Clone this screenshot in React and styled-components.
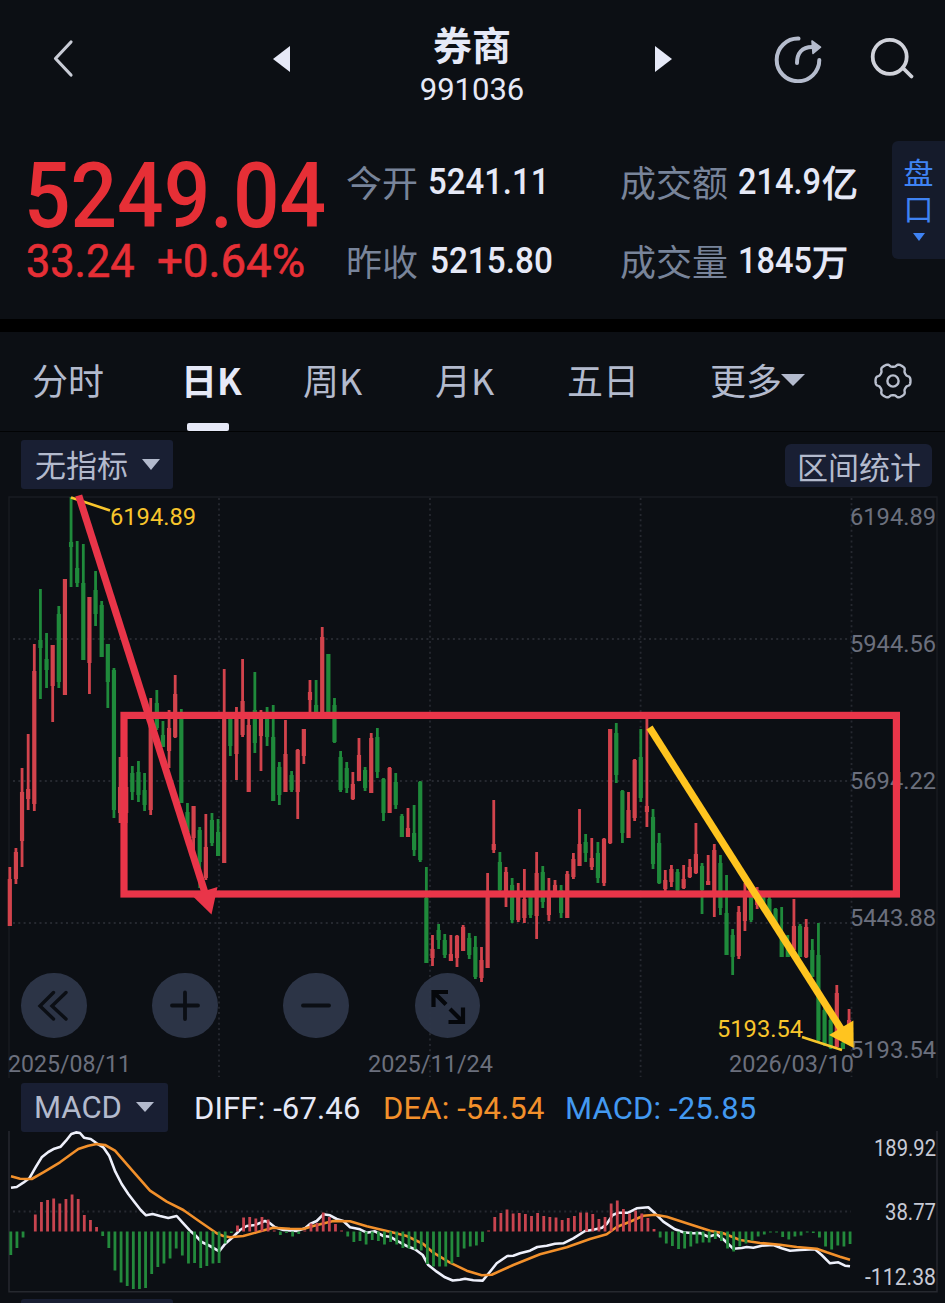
import React from 'react';
import styled, { createGlobalStyle } from 'styled-components';

const NUM = 'Roboto, "Noto Sans CJK SC", sans-serif';
const CJK = '"Noto Sans CJK SC", sans-serif';

const c = {
  bg: '#0c0f14',
  chip: '#191f33',
  up: '#d2434c',
  down: '#1f8a3b',
  red: '#e62f36',
  text: '#e6e9f7',
  soft: '#b3bacd',
  muted: '#78849a',
  axis: '#6b6f7d',
  yellow: '#f8c52c',
  orange: '#f2902b',
  blue: '#4399f0',
  mark: '#e93549',
};

const Global = createGlobalStyle`
  * { box-sizing: border-box; }
  body { margin: 0; background: ${c.bg}; overflow: hidden; }
  svg { display: block; }
`;

const Screen = styled.main`
  width: 945px;
  height: 1303px;
  overflow: hidden;
  display: flex;
  flex-direction: column;
  background: ${c.bg};
  color: ${c.text};
  font-family: ${CJK};
`;

const Header = styled.header`
  height: 118px;
  flex: none;
  display: flex;
  align-items: center;
`;

const IconButton = styled.span`
  flex: none;
  margin-left: ${(p) => p.$before}px;
`;

const Title = styled.div`
  width: 120px;
  margin-left: 122px;
  padding-top: 11px;
  text-align: center;
`;

const Name = styled.div`
  font-size: 39px;
  font-weight: 700;
  line-height: 46px;
`;

const Code = styled.div`
  font: 400 31px/38px ${NUM};
  margin-top: 5px;
`;

const Summary = styled.section`
  height: 201px;
  flex: none;
  display: flex;
  padding-top: 23px;
`;

const PriceBlock = styled.div`
  width: 322px;
  margin-left: 24px;
  color: ${c.red};
  font-family: ${NUM};
  white-space: nowrap;
`;

const Stretch = styled.span`
  display: inline-block;
  transform: scaleX(${(p) => p.$x});
  transform-origin: left center;
`;

const Price = styled.div`
  font-size: 91px;
  font-weight: 500;
  line-height: 92px;
  margin-top: 9px;
`;

const Change = styled.div`
  display: flex;
  font-size: 46px;
  line-height: 46px;
  margin-top: -4px;
  margin-left: 2px;
  -webkit-text-stroke: 0.6px ${c.red};

  > span:first-child { width: 131px; }
`;

const Stats = styled.div`
  display: grid;
  grid-template-columns: 274px 271px;
  grid-template-rows: 79px 79px;
  padding-top: 22px;
`;

const Stat = styled.div`
  display: flex;
  height: 38px;
  align-items: center;
  white-space: nowrap;
`;

const StatLabel = styled.span`
  color: ${c.muted};
  font-size: 36px;
  line-height: 38px;
  margin-top: -2px;
  margin-right: ${(p) => p.$gap || 10}px;
`;

const StatValue = styled.span`
  font: 500 37px/38px ${NUM};
  width: ${(p) => p.$w}px;
`;

const StatUnit = styled.span`
  font-size: 36px;
  font-weight: 400;
  line-height: 38px;
  margin-top: -3px;
  -webkit-text-stroke: 1px ${c.text};
`;

const SidePanel = styled.div`
  width: 54px;
  height: 118px;
  margin-left: 1px;
  border-radius: 6px 0 0 6px;
  background: #151b2b;
  color: #3f83f3;
  font-size: 30px;
  line-height: 36px;
  display: flex;
  flex-direction: column;
  align-items: center;
  padding-top: 12px;
`;

const Caret = styled.i`
  width: 0;
  height: 0;
  border-style: solid;
  border-color: currentColor transparent transparent;
  border-width: ${(p) => p.$h}px ${(p) => p.$w / 2}px 0;
  margin: ${(p) => p.$m || 0};
`;

const Band = styled.div`
  height: 13px;
  flex: none;
  background: #000;
`;

const Tabs = styled.nav`
  height: 100px;
  flex: none;
  display: grid;
  grid-template-columns: 149px 122px 132px 132px 143px 163px 40px;
  padding-left: 32px;
  border-bottom: 1px solid #020304;
`;

const Tab = styled.div`
  display: flex;
  align-items: center;
  height: 98px;
  padding-bottom: ${(p) => (p.$icon ? 0 : 5)}px;
  color: ${(p) => (p.$active ? c.text : c.soft)};
  font-size: 36px;
  font-weight: ${(p) => (p.$active ? 700 : 400)};
  position: relative;

  &::after {
    content: '';
    display: ${(p) => (p.$active ? 'block' : 'none')};
    position: absolute;
    left: 6px;
    bottom: -1px;
    width: 42px;
    height: 8px;
    border-radius: 2px;
    background: ${c.text};
  }
`;

const Toolbar = styled.div`
  height: 58px;
  flex: none;
  display: flex;
  justify-content: space-between;
  padding: 8px 13px 0 21px;
`;

const Chip = styled.div`
  height: ${(p) => p.$h}px;
  width: ${(p) => p.$w}px;
  margin-top: ${(p) => p.$top || 0}px;
  padding-left: ${(p) => p.$pad}px;
  padding-bottom: ${(p) => p.$lift || 0}px;
  border-radius: ${(p) => p.$r || 3}px;
  background: ${c.chip};
  color: ${c.soft};
  font-family: ${(p) => p.$font || CJK};
  font-size: 31px;
  display: flex;
  align-items: center;
  white-space: nowrap;
`;

const ChartArea = styled.section`
  position: relative;
  height: 593px;
  flex: none;
`;

const Controls = styled.div`
  position: absolute;
  left: 21px;
  top: 482.5px;
  display: flex;
  gap: 65.5px;
`;

const Round = styled.span`
  width: 65.7px;
  height: 65.7px;
  border-radius: 50%;
  background: rgba(46, 54, 73, 0.96);
`;

const MacdBar = styled.div`
  height: 48px;
  flex: none;
  display: flex;
  align-items: center;
  padding-left: 21px;
`;

const Reading = styled.span`
  font: 400 31px/40px ${NUM};
  color: ${(p) => p.$color};
  width: ${(p) => p.$w}px;
  margin-left: ${(p) => p.$before || 0}px;
  padding-top: 3px;
  letter-spacing: 0.15px;
  white-space: nowrap;
`;

const NextChip = styled.div`
  width: 152px;
  height: 6px;
  margin: 6px 0 0 21px;
  border-radius: 3px 3px 0 0;
  background: ${c.chip};
`;

const STEP = 6.126;

// [rising, high, low, body top, body bottom]
const candles = [
  [1,867,926,879,926],[1,848,884,852,879],[1,768,867,792,841],[1,734,810,789,799],[1,644,811,671,804],
  [0,589,699,640,648],[0,633,688,659,670],[1,645,722,645,686],[0,606,688,614,682],[1,579,695,579,695],
  [0,497,587,542,547],[0,541,587,568,583],[0,544,660,583,660],[1,597,694,597,663],[0,571,626,590,614],
  [0,601,657,605,657],[0,644,708,644,682],[0,668,818,670,810],[1,757,823,787,813],[1,757,823,787,813],
  [0,766,800,773,792],[0,761,802,772,795],[0,773,811,790,805],[1,698,815,717,810],[0,690,730,703,728],
  [0,721,747,735,747],[1,710,768,728,751],[1,675,738,694,737],[0,709,803,715,803],[0,803,832,812,832],
  [1,806,850,806,838],[0,827,888,830,862],[1,814,880,847,878],[0,813,846,820,843],[0,819,856,832,856],
  [1,669,863,717,863],[0,716,756,718,746],[1,707,780,719,754],[1,659,737,701,735],[1,716,792,725,792],
  [0,672,753,710,743],[1,710,771,713,736],[0,707,746,717,737],[0,705,801,737,801],[0,762,805,767,795],
  [1,720,792,754,792],[0,771,792,775,790],[1,749,819,750,792],[1,729,764,729,756],[1,680,712,692,700],
  [0,680,719,705,718],[1,627,713,637,713],[0,654,713,654,713],[0,698,743,705,742],[0,751,792,757,790],
  [0,762,793,768,788],[1,772,800,784,799],[1,738,781,755,781],[0,767,791,770,788],[1,733,793,738,793],
  [0,728,778,737,772],[0,778,821,779,813],[1,767,813,768,813],[0,773,809,782,805],[0,814,837,816,837],
  [1,808,837,828,837],[0,805,856,833,850],[0,781,862,782,860],[0,867,963,898,963],[1,935,966,949,958],
  [0,924,949,930,940],[0,934,958,940,955],[1,935,961,954,961],[1,935,967,936,958],[1,925,951,927,951],
  [0,933,959,938,955],[0,936,979,947,977],[1,947,982,960,978],[1,873,968,897,968],[1,800,853,844,850],
  [0,852,891,862,890],[1,867,907,872,897],[0,878,923,885,920],[1,883,922,892,920],[1,869,923,899,918],
  [0,893,918,897,915],[1,852,939,873,916],[0,866,908,872,902],[1,878,921,893,915],[1,880,893,885,893],
  [0,885,918,890,913],[1,871,918,874,918],[1,853,879,859,877],[1,809,866,844,866],[0,834,862,842,853],
  [1,838,870,858,867],[0,842,883,853,878],[1,838,886,839,883],[1,729,844,729,843],[0,723,783,733,775],
  [0,790,843,791,833],[1,792,838,810,838],[1,759,821,760,818],[0,729,802,757,798],[1,719,827,806,812],
  [0,809,869,817,864],[0,833,884,843,883],[1,870,892,880,889],[1,865,887,869,882],[0,869,892,872,890],
  [1,865,889,879,888],[1,859,878,867,877],[1,823,874,854,873],[0,863,914,866,890],[1,855,885,881,885],
  [1,844,917,850,895],[0,855,915,863,908],[0,875,955,913,955],[0,929,975,935,957],[1,906,959,912,956],
  [1,883,931,897,921],[0,897,922,897,920],[1,887,909,890,905],[0,892,905,893,905],[0,897,917,899,915],
  [0,908,930,909,928],[0,907,957,933,957],[0,935,957,945,957],[1,899,950,926,950],[0,924,957,926,957],
  [1,919,958,927,957],[0,939,977,950,977],[0,923,1043,955,1040],[0,1005,1046,1010,1044],[0,1015,1049,1020,1048],
  [1,985,1047,993,1047],[0,1042,1049,1043,1049],[1,1009,1030,1020,1030],
];

const histogram = [
  -23.5,-16.5,-6,0,17,29.5,31.5,33,28,32.5,37,32.5,16.5,11.5,4.5,-4.5,-16.5,-39,-51,-54.5,
  -57.5,-57.5,-56.5,-42.5,-35.5,-32,-27,-17,-24,-32,-31.5,-36.5,-34.5,-32,-31.5,-12,-1.5,6,14,14.5,
  13,14.5,12,1,-3.5,-1.5,-5,-2.5,1,8,8.5,19,14.5,7.5,1,-5,-10.5,-9.5,-13,-8.5,
  -9.5,-13,-10.5,-13,-16.5,-17,-18,-19,-32.5,-35,-35,-35,-32,-25.5,-17,-15,-14,-10.5,1,14.5,
  18.5,22,18,18.5,17.5,15.5,18.5,15.5,14.5,14,11.5,13.5,15.5,19,19,17.5,12.5,14.5,28,31,
  22.5,18,21,18,13.5,2.5,-6,-12,-14.5,-17.5,-17,-15,-12,-11,-11,-7.5,-9.5,-17,-20,-15,
  -12,-9,-5,-3,-1,-1,-5.5,-8,-5,-4,-1,-1.5,-6,-15,-18,-14,-15,-12.5,
];

const diff = `11,1187.7 16.7,1187 23.3,1182.7 29.3,1178.3 36,1166.7 41.7,1157.3 48.3,1152 54.3,1148.7 60.7,1146.7
 66,1140.7 71.3,1134 76,1132.4 80,1133 84,1137.7 90.7,1139 96.7,1143.3 103.3,1147.3 109.3,1156 115.3,1171.7 121.7,1184
 128.3,1194 135,1202.7 140.7,1210 146,1215.3 152.7,1214 160,1216 168.3,1218 176.7,1216 183.3,1223.3 190,1230.7
 195,1235 201.7,1242 210,1246 219.3,1251.3 225,1244 233.3,1236.7 240,1230 246.7,1226 255,1225 265,1221
 269.3,1222.7 275,1227.3 283.3,1230 296.7,1231 305,1228.3 310,1224 316.7,1221 323.3,1214.3 330,1215.3 336.7,1219
 343.3,1221 350,1227.3 360,1229.3 366.7,1232.7 375,1231.3 383.3,1236 390,1236.7 396.7,1240.7 406.7,1246 415,1249.3
 422.7,1255 428.3,1265 436.7,1271.7 445,1277.3 452.7,1280.5 460,1279.7 465,1278.7 473.3,1280.3 482.7,1280.6
 490,1271.7 496.7,1263.3 507.3,1256 513.3,1255.7 520,1253.3 530,1250.7 537.3,1247 546.7,1245.7 555,1243.7
 563.3,1243.3 573.3,1238.3 585,1231 593.3,1229.7 602,1227.7 606.7,1224 612.7,1215 618.3,1212.7 628.3,1212.7
 636.7,1208.3 648.3,1207.3 655,1213.3 663.3,1221.7 675,1229.3 683.3,1232.3 693.3,1233.3 700,1233 708.3,1236.7
 716.7,1234.3 723.3,1239.3 733.3,1248.7 741.7,1248 746.7,1247 753.3,1247.7 761.7,1245.7 773.3,1245 781.7,1248.3
 790,1250.7 800,1250 815,1249.3 821.7,1255 830,1263.3 838.3,1262.3 845,1265.7 850,1266.3`;

const dea = `11,1176.3 20,1178.7 31.7,1179 43.3,1172.3 60,1162.3 78.3,1149 88.3,1145.7 96.7,1144 105,1145
 115,1150.7 133.3,1171.7 150,1190.7 166.7,1201.7 183.3,1210 200,1221.7 216.7,1233.3 223.3,1236 230,1237.3
 243.3,1236 256.7,1232.3 273.3,1227.7 290,1228.7 303.3,1229 313.3,1226 333.3,1221 350,1221.3 366.7,1226.3
 390,1231.7 406.7,1236 423.3,1244 433.3,1252.7 450,1262.7 466.7,1270.7 481.7,1275.3 491.7,1274.7 513.3,1265
 540,1254.3 566.7,1247.3 590,1239 606.7,1234.3 616.7,1227 630,1221.7 643.3,1215.7 655,1214.7 666.7,1216.7
 686.7,1223.3 710,1230.7 723.3,1233.3 740,1240 760,1243 780,1244.7 796.7,1247 816.7,1248.7 826.7,1252.3
 840,1256.7 850,1259.7`;

const Axis = styled.text`
  font-family: ${NUM};
  font-size: ${(p) => p.$size || 24.5}px;
  fill: ${(p) => p.$fill || c.axis};
`;

function Label({ x, y, w, children, ...rest }) {
  return (
    <Axis x={x} y={y} textLength={w} lengthAdjust="spacingAndGlyphs" {...rest}>
      {children}
    </Axis>
  );
}

function PriceChart() {
  return (
    <svg width="945" height="593" viewBox="0 490 945 593">
      <path d="M9 1078V497H937V1078" fill="none" stroke="#191c22" strokeWidth="1.3" />
      <g stroke="#262930" strokeWidth="1.8" strokeDasharray="2 3.3">
        {[639, 781, 923].map((y) => <path key={y} d={`M13 ${y}H851`} />)}
        {[219, 430, 640.6, 851.5].map((x) => <path key={x} d={`M${x} 498V1077`} />)}
      </g>
      {candles.map(([up, hi, lo, top, bottom], i) => {
        const x = 9.8 + i * STEP;
        return (
          <g key={i} fill={up ? c.up : c.down}>
            <rect x={x - 1.4} y={hi} width="2.8" height={lo - hi} />
            <rect x={x - 2.1} y={top} width="4.2" height={bottom - top} />
          </g>
        );
      })}
      <Label x="850" y="524.5" w="86">6194.89</Label>
      <Label x="850" y="651.5" w="86">5944.56</Label>
      <Label x="850" y="788.5" w="86">5694.22</Label>
      <Label x="850" y="925.5" w="86">5443.88</Label>
      <Label x="850" y="1057.5" w="86">5193.54</Label>
      <Label x="8" y="1072" w="123">2025/08/11</Label>
      <Label x="368" y="1072" w="125">2025/11/24</Label>
      <Label x="729" y="1072" w="125">2026/03/10</Label>
      <g stroke={c.yellow} strokeWidth="2.6" fill="none">
        <path d="M71 497.5L110 510.5" />
        <path d="M802 1037L842 1050" />
      </g>
      <Label x="110" y="524.5" w="86" $fill={c.yellow}>6194.89</Label>
      <Label x="717" y="1037" w="86" $fill={c.yellow}>5193.54</Label>
      <rect x="124" y="715.4" width="772.4" height="178.6" fill="none" stroke={c.mark} strokeWidth="7.2" />
      <path d="M78.7 495.5L206 896" stroke={c.mark} strokeWidth="7.2" />
      <path d="M191.5 895L217.5 887L211.5 914.5Z" fill={c.mark} />
      <path d="M649.5 727.5L843 1032" stroke="#ffc41f" strokeWidth="7.2" />
      <path d="M829 1035L853.4 1020.5L853.7 1048Z" fill="#ffc41f" />
    </svg>
  );
}

const MacdSvg = styled.svg`
  flex: none;
`;

function MacdChart() {
  return (
    <MacdSvg width="945" height="162" viewBox="0 1131 945 162">
      <path d="M9 1131V1291.7H937V1131" fill="none" stroke="#26292f" strokeWidth="1.5" />
      <path d="M13 1211.5H851" stroke="#262930" strokeWidth="1.8" strokeDasharray="2 3.3" />
      <g fill="none" strokeWidth="2.6" strokeLinejoin="round">
        <polyline points={diff} stroke="#eef0fb" />
        <polyline points={dea} stroke={c.orange} />
      </g>
      {histogram.map((v, i) => (
        <rect
          key={i}
          x={9.4 + i * STEP}
          y={v > 0 ? 1231.5 - v : 1231.5}
          width="2.8"
          height={Math.abs(v)}
          fill={v > 0 ? '#c8444f' : '#238a3c'}
        />
      ))}
      <Label x="874" y="1155.5" w="62" $size={23} $fill="#c6c9d5">189.92</Label>
      <Label x="885" y="1220" w="51" $size={23} $fill="#c6c9d5">38.77</Label>
      <Label x="865" y="1284.5" w="71" $size={23} $fill="#c6c9d5">-112.38</Label>
    </MacdSvg>
  );
}

const gear = (() => {
  const pts = [];
  for (let k = 0; k <= 144; k += 1) {
    const a = (k / 144) * Math.PI * 2;
    const r = 15.8 + 1.7 * Math.tanh(2 * (Math.cos(6 * a) + 0.25));
    pts.push(`${(20 + r * Math.cos(a)).toFixed(2)} ${(20 + r * Math.sin(a)).toFixed(2)}`);
  }
  return `M${pts.join('L')}Z`;
})();

export default function App() {
  return (
    <Screen>
      <Global />
      <Header>
        <IconButton $before={52}>
          <svg width="22" height="40" viewBox="0 0 22 40" fill="none" stroke="#c9ccd6" strokeWidth="3.2" strokeLinecap="round" strokeLinejoin="round">
            <path d="M19 3L3.5 19.5L19 36" />
          </svg>
        </IconButton>
        <IconButton $before={199}>
          <svg width="17" height="26" viewBox="0 0 17 26" fill={c.text}><path d="M0 13L17 0V26Z" /></svg>
        </IconButton>
        <Title>
          <Name>券商</Name>
          <Code>991036</Code>
        </Title>
        <IconButton $before={123}>
          <svg width="17" height="26" viewBox="0 0 17 26" fill={c.text}><path d="M17 13L0 0V26Z" /></svg>
        </IconButton>
        <IconButton $before={102}>
          <svg width="48" height="48" viewBox="0 0 48 48" fill="none" stroke="#b5bccd" strokeWidth="4" strokeLinecap="round">
            <path d="M24.5 3.6A21.3 21.3 0 1 0 45.3 25" />
            <path d="M23 28C23 18 28 12 38 12" />
            <path d="M38 6L46.5 12.2L39 18.5Z" fill="#b5bccd" strokeWidth="1.6" strokeLinejoin="round" />
          </svg>
        </IconButton>
        <IconButton $before={48}>
          <svg width="46" height="46" viewBox="0 0 46 46" fill="none" stroke="#d0d2da" strokeWidth="3.8" strokeLinecap="round">
            <circle cx="19.7" cy="20.8" r="17" />
            <path d="M33 32L41.5 40.5" />
          </svg>
        </IconButton>
      </Header>

      <Summary>
        <PriceBlock>
          <Price><Stretch $x={0.9}>5249.04</Stretch></Price>
          <Change>
            <span><Stretch $x={0.94}>33.24</Stretch></span>
            <span><Stretch $x={0.99}>+0.64%</Stretch></span>
          </Change>
        </PriceBlock>
        <Stats>
          <Stat><StatLabel>今开</StatLabel><StatValue $w={120}><Stretch $x={0.89}>5241.11</Stretch></StatValue></Stat>
          <Stat>
            <StatLabel>成交额</StatLabel>
            <StatValue $w={84}><Stretch $x={0.88}>214.9</Stretch></StatValue>
            <StatUnit>亿</StatUnit>
          </Stat>
          <Stat><StatLabel $gap={12}>昨收</StatLabel><StatValue $w={120}><Stretch $x={0.9}>5215.80</Stretch></StatValue></Stat>
          <Stat>
            <StatLabel>成交量</StatLabel>
            <StatValue $w={74}><Stretch $x={0.88}>1845</Stretch></StatValue>
            <StatUnit>万</StatUnit>
          </Stat>
        </Stats>
        <SidePanel>
          <span>盘</span>
          <span>口</span>
          <Caret $w={13} $h={8} $m="8px 0 0" />
        </SidePanel>
      </Summary>

      <Band />

      <Tabs>
        <Tab>分时</Tab>
        <Tab $active>日K</Tab>
        <Tab>周K</Tab>
        <Tab>月K</Tab>
        <Tab>五日</Tab>
        <Tab>更多<Caret $w={24} $h={12} $m="3px 0 0 -1px" /></Tab>
        <Tab $icon>
          <svg width="40" height="40" viewBox="0 0 40 40" fill="none" stroke="#b9bfce" strokeWidth="2.4" strokeLinejoin="round">
            <path d={gear} />
            <circle cx="20" cy="20" r="5.6" />
          </svg>
        </Tab>
      </Tabs>

      <Toolbar>
        <Chip $w={152} $h={49} $pad={14} $lift={2}>无指标<Caret $w={18} $h={11} $m="2px 0 0 14px" /></Chip>
        <Chip $w={147} $h={43} $top={4} $pad={12} $r={6} $lift={1}>区间统计</Chip>
      </Toolbar>

      <ChartArea>
        <PriceChart />
        <Controls>
          <Round>
            <svg width="66" height="66" viewBox="0 0 66 66" fill="none" stroke="#0b0e14" strokeWidth="3.4" strokeLinecap="round">
              <path d="M32.5 19.5L19 33L32.5 46M45 19.5L31 33L45 46" />
            </svg>
          </Round>
          <Round>
            <svg width="66" height="66" viewBox="0 0 66 66" fill="none" stroke="#0b0e14" strokeWidth="3.8" strokeLinecap="round">
              <path d="M20 32.5H46M33 19.5V46" />
            </svg>
          </Round>
          <Round>
            <svg width="66" height="66" viewBox="0 0 66 66" fill="none" stroke="#0b0e14" strokeWidth="3.8" strokeLinecap="round">
              <path d="M20 32.5H46" />
            </svg>
          </Round>
          <Round>
            <svg width="66" height="66" viewBox="0 0 66 66" fill="none" stroke="#05070b" strokeWidth="4.2">
              <path d="M18.5 34V19H33M19 19.5L31 31.5M48 34.5V49H33.5M35 36L47.5 48.5" />
            </svg>
          </Round>
        </Controls>
      </ChartArea>

      <MacdBar>
        <Chip $w={147} $h={49} $pad={13} $font={NUM}>MACD<Caret $w={18} $h={10} $m="0 0 0 14px" /></Chip>
        <Reading $before={26} $w={189} $color={c.text}>DIFF: -67.46</Reading>
        <Reading $w={182} $color={c.orange}>DEA: -54.54</Reading>
        <Reading $w={200} $color={c.blue}>MACD: -25.85</Reading>
      </MacdBar>
      <MacdChart />
      <NextChip />
    </Screen>
  );
}
